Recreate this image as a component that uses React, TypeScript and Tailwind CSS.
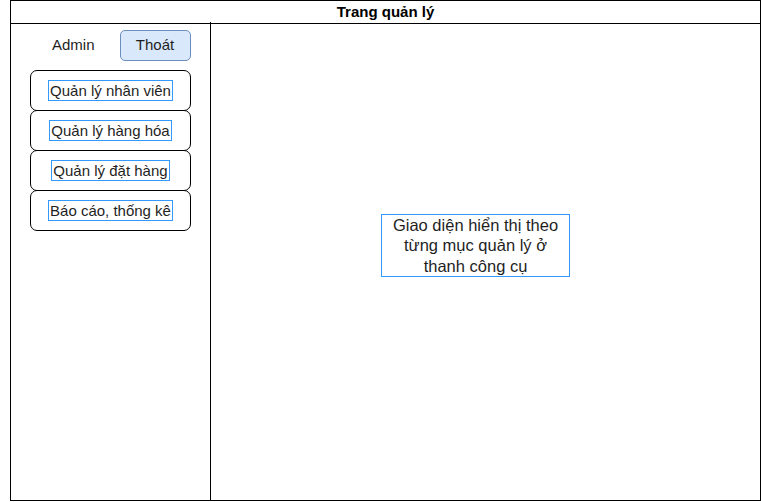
import React from 'react';

const MENU = ['Quản lý nhân viên', 'Quản lý hàng hóa', 'Quản lý đặt hàng', 'Báo cáo, thống kê'];

export default function App() {
  return (
    <div className="w-[761px] h-[502px] bg-white font-['Liberation_Sans',Arial,sans-serif] text-[#1f1f1f]">
      <div className="ml-[10px] w-[751px] h-[501px] border border-black flex flex-col">
        {/* Header */}
        <div className="h-[23px] border-b border-black flex items-center justify-center text-[15px] font-bold text-black">
          Trang quản lý
        </div>

        <div className="flex flex-1">
          {/* Sidebar */}
          <div className="w-[200px] border-r border-black -mt-[2px] pt-[2px]">
            <div className="flex items-center mt-[6px] h-[31px]">
              <span className="ml-[41px] text-[15px]">Admin</span>
              <button className="ml-[25px] w-[71px] h-[31px] rounded-[5px] border border-[#6c8ebf] bg-[#dae8fc] text-[15px]">
                Thoát
              </button>
            </div>
            <div className="mt-[9px] ml-[19px] w-[161px] flex flex-col">
              {MENU.map((item, i) => (
                <div
                  key={item}
                  className={`h-[41px] rounded-[7px] border border-black bg-white flex items-center justify-center ${i > 0 ? '-mt-px' : ''}`}
                >
                  <span className="border border-[#3399ff] px-px leading-[19px] text-[15px]">{item}</span>
                </div>
              ))}
            </div>
          </div>

          {/* Main */}
          <div className="flex-1 pl-[170px] pt-[190px]">
            <div className="w-[189px] h-[63px] border border-[#3399ff] flex items-center justify-center text-center text-[16.5px] leading-[20.5px]">
              Giao diện hiển thị theo
              <br />
              từng mục quản lý ở
              <br />
              thanh công cụ
            </div>
          </div>
        </div>
      </div>
    </div>
  );
}
